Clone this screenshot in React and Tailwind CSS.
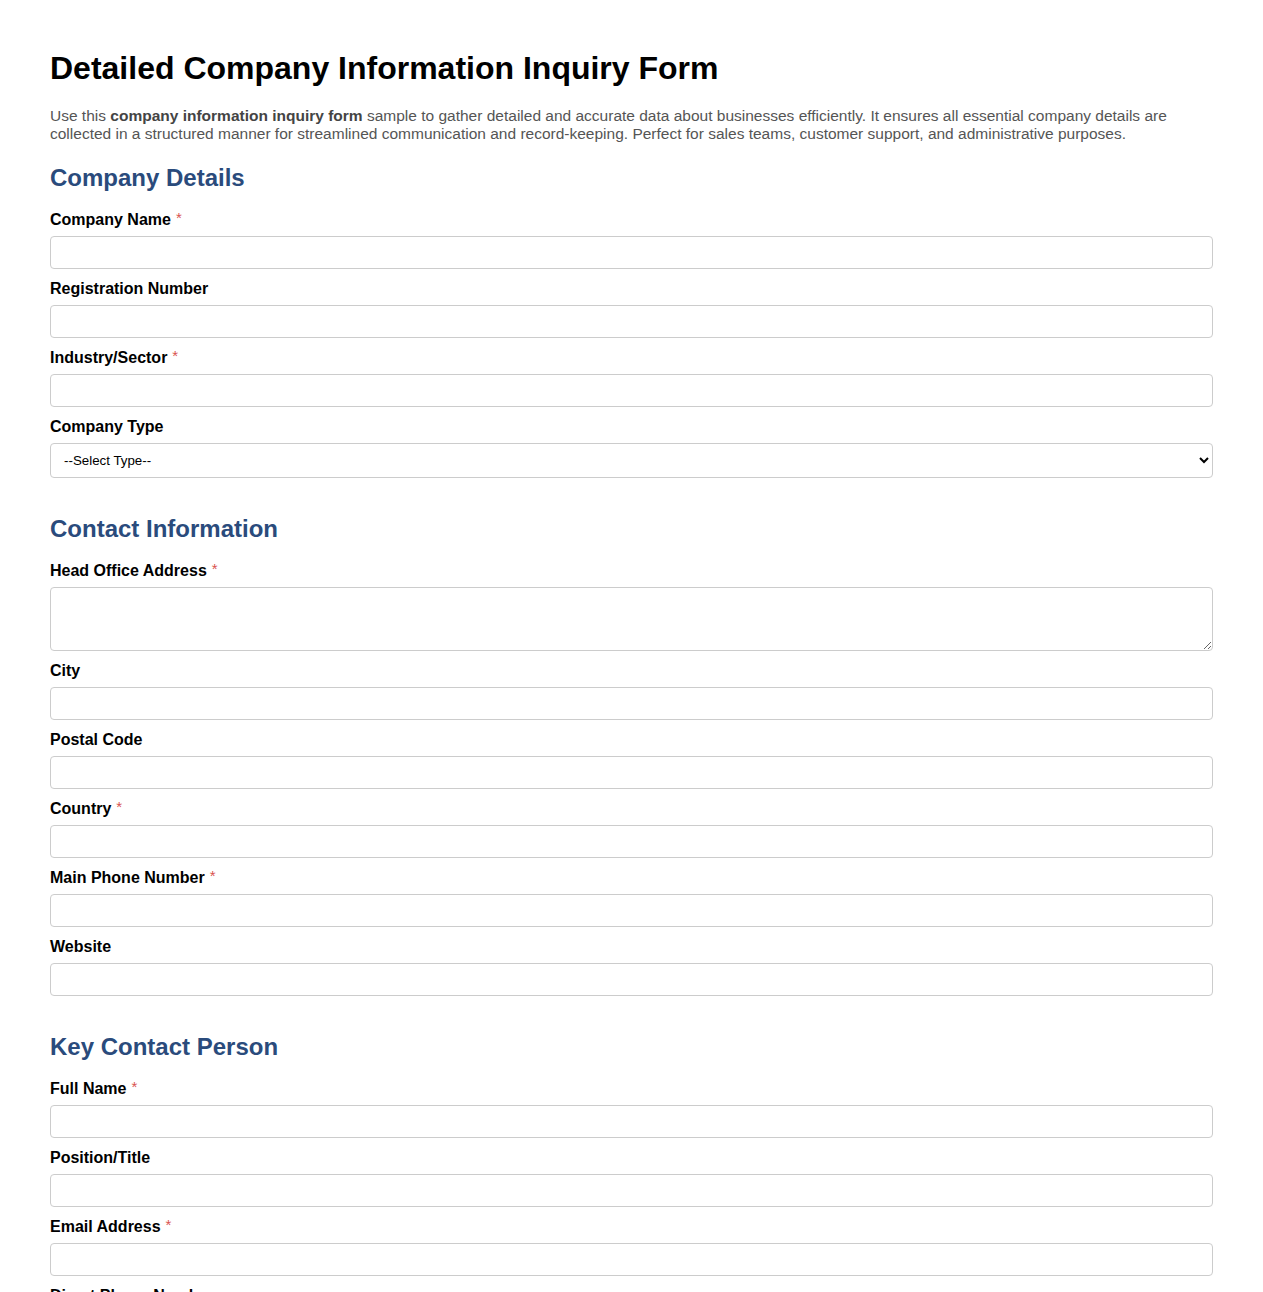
import { useState } from "react";

const sections = [
  {
    title: "Company Details",
    fields: [
      { label: "Company Name", required: true },
      { label: "Registration Number" },
      { label: "Industry/Sector", required: true },
      { label: "Company Type", type: "select", options: ["--Select Type--", "Private Limited", "Public Limited", "Partnership", "Sole Proprietorship", "Non-Profit"] },
    ],
  },
  {
    title: "Contact Information",
    fields: [
      { label: "Head Office Address", required: true, type: "textarea" },
      { label: "City" },
      { label: "Postal Code" },
      { label: "Country", required: true },
      { label: "Main Phone Number", required: true },
      { label: "Website" },
    ],
  },
  {
    title: "Key Contact Person",
    fields: [
      { label: "Full Name", required: true },
      { label: "Position/Title" },
      { label: "Email Address", required: true },
      { label: "Direct Phone Number" },
    ],
  },
];

const Field = ({ field }) => {
  const [value, setValue] = useState("");
  const base =
    "block w-full border border-[#cccccc] rounded-[4px] bg-white px-[10px] text-black outline-none";

  return (
    <div className="mb-[11px]">
      <label className="block mb-[7px] text-[16px] leading-[18px] font-bold text-black">
        {field.label}
        {field.required && (
          <span className="ml-[5px] font-normal text-[15px] leading-[14px] text-[#d9534f] align-top">*</span>
        )}
      </label>
      {field.type === "textarea" ? (
        <textarea
          value={value}
          onChange={(e) => setValue(e.target.value)}
          className={`${base} h-[64px] py-[6px]`}
        />
      ) : field.type === "select" ? (
        <select
          value={value}
          onChange={(e) => setValue(e.target.value)}
          className={`${base} h-[35px] text-[13.33px] pl-[9px] pr-[6px]`}
        >
          {field.options.map((o) => (
            <option key={o} value={o === field.options[0] ? "" : o}>
              {o}
            </option>
          ))}
        </select>
      ) : (
        <input
          type="text"
          value={value}
          onChange={(e) => setValue(e.target.value)}
          className={`${base} h-[33px]`}
        />
      )}
    </div>
  );
};

const App = () => {
  return (
    <div className="min-h-screen bg-white px-[50px] pt-[50px] pb-10 font-['Liberation_Sans',Arial,sans-serif]">
      <h1 className="text-[32px] leading-[37px] font-bold text-black mb-[20px]">
        Detailed Company Information Inquiry Form
      </h1>
      <p className="text-[15.5px] leading-[18px] text-[#555555] mb-[21px]">
        Use this <strong className="font-bold text-[#444444]">company information inquiry form</strong> sample
        to gather detailed and accurate data about businesses efficiently. It ensures all essential company
        details are collected in a structured manner for streamlined communication and record-keeping.
        Perfect for sales teams, customer support, and administrative purposes.
      </p>

      {sections.map((section) => (
        <div key={section.title} className="mb-[37px]">
          <h2 className="text-[24px] leading-[28px] font-bold text-[#2a4b7c] mb-[19px]">
            {section.title}
          </h2>
          {section.fields.map((field) => (
            <Field key={field.label} field={field} />
          ))}
        </div>
      ))}
    </div>
  );
};

export default App;
